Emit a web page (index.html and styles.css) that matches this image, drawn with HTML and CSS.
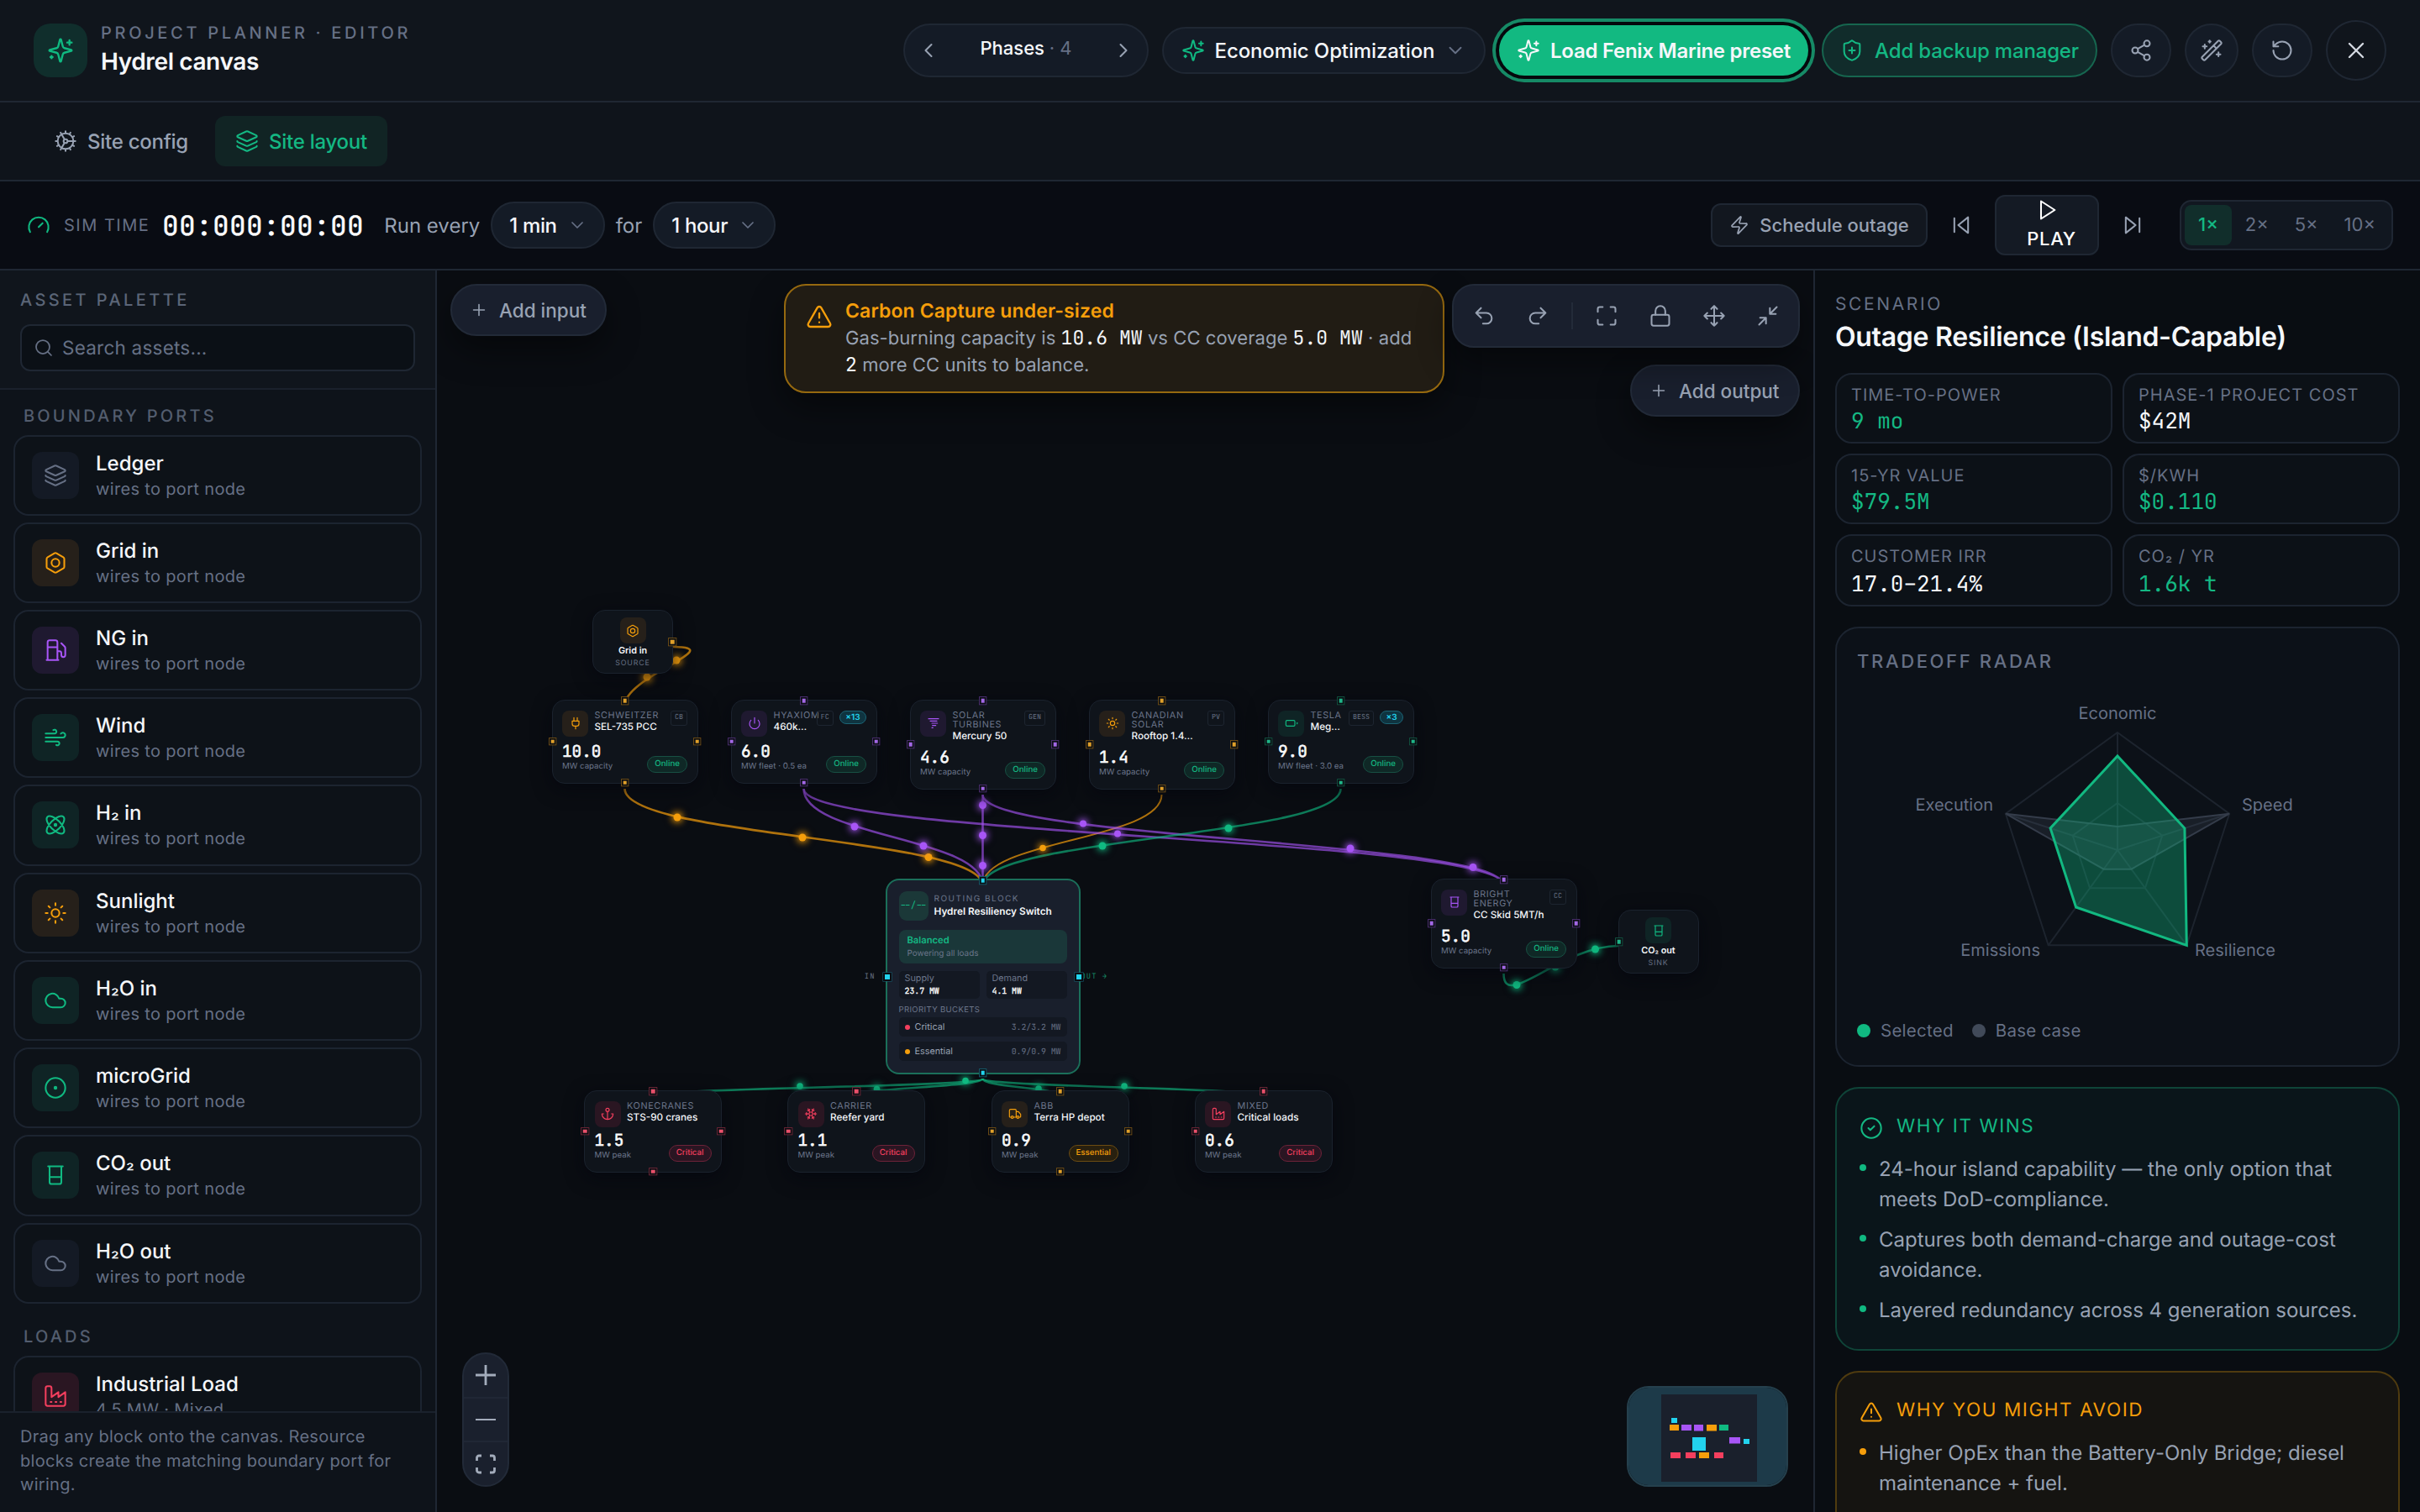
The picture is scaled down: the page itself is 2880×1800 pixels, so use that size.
FILE: index.html
```html
<!DOCTYPE html>
<html lang="en">
<head>
  <meta charset="UTF-8" />
  <meta name="viewport" content="width=device-width, initial-scale=1.0" />
  <title>Hydrel canvas</title>
  <link rel="stylesheet" href="styles.css">
</head>
<body>
  <svg class="sprite" aria-hidden="true">
    <symbol id="sparkles" viewBox="0 0 24 24"><path d="M9.937 15.5A2 2 0 0 0 8.5 14.063l-6.135-1.582a.5.5 0 0 1 0-.962L8.5 9.936A2 2 0 0 0 9.937 8.5l1.582-6.135a.5.5 0 0 1 .963 0L14.063 8.5A2 2 0 0 0 15.5 9.937l6.135 1.581a.5.5 0 0 1 0 .964L15.5 14.063a2 2 0 0 0-1.437 1.437l-1.582 6.135a.5.5 0 0 1-.963 0zM20 3v4M22 5h-4M4 17v2M5 18H3"/></symbol>
    <symbol id="cog" viewBox="0 0 24 24"><path d="M12 20a8 8 0 1 0 0-16 8 8 0 0 0 0 16ZM12 14a2 2 0 1 0 0-4 2 2 0 0 0 0 4ZM12 2v2M12 22v-2M17 20.66l-1-1.73M11 10.27 7 3.34M20.66 17l-1.73-1M3.34 7l1.73 1M14 12h8M2 12h2M20.66 7l-1.73 1M3.34 17l1.73-1M17 3.34l-1 1.73M11 13.73l-4 6.93"/></symbol>
    <symbol id="layers" viewBox="0 0 24 24"><path d="M12.83 2.18a2 2 0 0 0-1.66 0L2.6 6.08a1 1 0 0 0 0 1.83l8.58 3.91a2 2 0 0 0 1.66 0l8.58-3.9a1 1 0 0 0 0-1.83ZM2 12a1 1 0 0 0 .58.91l8.6 3.91a2 2 0 0 0 1.65 0l8.58-3.9A1 1 0 0 0 22 12M2 17a1 1 0 0 0 .58.91l8.6 3.91a2 2 0 0 0 1.65 0l8.58-3.9A1 1 0 0 0 22 17"/></symbol>
    <symbol id="gauge" viewBox="0 0 24 24"><path d="m12 14 4-4M3.34 19a10 10 0 1 1 17.32 0"/></symbol>
    <symbol id="chev-down" viewBox="0 0 24 24"><path d="m6 9 6 6 6-6"/></symbol>
    <symbol id="chev-left" viewBox="0 0 24 24"><path d="m15 18-6-6 6-6"/></symbol>
    <symbol id="chev-right" viewBox="0 0 24 24"><path d="m9 18 6-6-6-6"/></symbol>
    <symbol id="share" viewBox="0 0 24 24"><circle cx="18" cy="5" r="3"/><circle cx="6" cy="12" r="3"/><circle cx="18" cy="19" r="3"/><path d="m8.59 13.51 6.83 3.98M15.41 6.51l-6.82 3.98"/></symbol>
    <symbol id="wand" viewBox="0 0 24 24"><path d="m21.64 3.64-1.28-1.28a1.21 1.21 0 0 0-1.72 0L2.36 18.64a1.21 1.21 0 0 0 0 1.72l1.28 1.28a1.2 1.2 0 0 0 1.72 0L21.64 5.36a1.2 1.2 0 0 0 0-1.72M14 7l3 3M5 6v4M19 14v4M10 2v2M7 8H3M21 16h-4M11 3H9"/></symbol>
    <symbol id="reset" viewBox="0 0 24 24"><path d="M3 12a9 9 0 1 0 9-9 9.75 9.75 0 0 0-6.74 2.74L3 8M3 3v5h5"/></symbol>
    <symbol id="close" viewBox="0 0 24 24"><path d="M18 6 6 18M6 6l12 12"/></symbol>
    <symbol id="shield" viewBox="0 0 24 24"><path d="M20 13c0 5-3.5 7.5-7.66 8.95a1 1 0 0 1-.67-.01C7.5 20.5 4 18 4 13V6a1 1 0 0 1 1-1c2 0 4.5-1.2 6.24-2.72a1.17 1.17 0 0 1 1.52 0C14.51 3.81 17 5 19 5a1 1 0 0 1 1 1zM9 12h6M12 9v6"/></symbol>
    <symbol id="zap" viewBox="0 0 24 24"><path d="M4 14a1 1 0 0 1-.78-1.63l9.9-10.2a.5.5 0 0 1 .86.46l-1.92 6.02A1 1 0 0 0 13 10h7a1 1 0 0 1 .78 1.63l-9.9 10.2a.5.5 0 0 1-.86-.46l1.92-6.02A1 1 0 0 0 11 14z"/></symbol>
    <symbol id="skip-back" viewBox="0 0 24 24"><path d="M19 20 9 12l10-8zM5 19V5"/></symbol>
    <symbol id="skip-fwd" viewBox="0 0 24 24"><path d="m5 4 10 8-10 8zM19 5v14"/></symbol>
    <symbol id="play" viewBox="0 0 24 24"><path d="m6 3 14 9-14 9z"/></symbol>
    <symbol id="undo" viewBox="0 0 24 24"><path d="M9 14 4 9l5-5M4 9h10.5a5.5 5.5 0 0 1 0 11H11"/></symbol>
    <symbol id="redo" viewBox="0 0 24 24"><path d="m15 14 5-5-5-5M20 9H9.5a5.5 5.5 0 0 0 0 11H13"/></symbol>
    <symbol id="maximize" viewBox="0 0 24 24"><path d="M8 3H5a2 2 0 0 0-2 2v3M21 8V5a2 2 0 0 0-2-2h-3M3 16v3a2 2 0 0 0 2 2h3M16 21h3a2 2 0 0 0 2-2v-3"/></symbol>
    <symbol id="lock" viewBox="0 0 24 24"><rect x="3" y="11" width="18" height="11" rx="2"/><path d="M7 11V7a5 5 0 0 1 10 0v4"/></symbol>
    <symbol id="move" viewBox="0 0 24 24"><path d="M12 2v20M15 19l-3 3-3-3M19 9l3 3-3 3M2 12h20M5 9l-3 3 3 3M9 5l3-3 3 3"/></symbol>
    <symbol id="minimize" viewBox="0 0 24 24"><path d="M4 14h6v6M20 10h-6V4M14 10l7-7M3 21l7-7"/></symbol>
    <symbol id="plus" viewBox="0 0 24 24"><path d="M5 12h14M12 5v14"/></symbol>
    <symbol id="search" viewBox="0 0 24 24"><circle cx="11" cy="11" r="8"/><path d="m21 21-4.3-4.3"/></symbol>
    <symbol id="nut" viewBox="0 0 24 24"><path d="M21 16V8a2 2 0 0 0-1-1.73l-7-4a2 2 0 0 0-2 0l-7 4A2 2 0 0 0 3 8v8a2 2 0 0 0 1 1.73l7 4a2 2 0 0 0 2 0l7-4A2 2 0 0 0 21 16z"/><circle cx="12" cy="12" r="4"/></symbol>
    <symbol id="fuel" viewBox="0 0 24 24"><path d="M3 22h12M4 9h10M14 22V4a2 2 0 0 0-2-2H6a2 2 0 0 0-2 2v18M14 13h2a2 2 0 0 1 2 2v2a2 2 0 0 0 4 0V9.83a2 2 0 0 0-.59-1.42L18 5"/></symbol>
    <symbol id="wind" viewBox="0 0 24 24"><path d="M12.8 19.6A2 2 0 1 0 14 16H2M17.5 8a2.5 2.5 0 1 1 2 4H2M9.8 4.4A2 2 0 1 1 11 8H2"/></symbol>
    <symbol id="atom" viewBox="0 0 24 24"><circle cx="12" cy="12" r="1"/><path d="M20.2 20.2c2.04-2.03.02-7.36-4.5-11.9-4.54-4.52-9.87-6.54-11.9-4.5-2.04 2.03-.02 7.36 4.5 11.9 4.54 4.52 9.87 6.54 11.9 4.5ZM15.7 15.7c4.52-4.54 6.54-9.87 4.5-11.9-2.03-2.04-7.36-.02-11.9 4.5-4.52 4.54-6.54 9.87-4.5 11.9 2.03 2.04 7.36.02 11.9-4.5Z"/></symbol>
    <symbol id="sun" viewBox="0 0 24 24"><circle cx="12" cy="12" r="4"/><path d="M12 2v2M12 20v2M4.93 4.93l1.41 1.41M17.66 17.66l1.41 1.41M2 12h2M20 12h2M6.34 17.66l-1.41 1.41M19.07 4.93l-1.41 1.41"/></symbol>
    <symbol id="cloud" viewBox="0 0 24 24"><path d="M17.5 19H9a7 7 0 1 1 6.71-9h1.79a4.5 4.5 0 1 1 0 9Z"/></symbol>
    <symbol id="dot" viewBox="0 0 24 24"><circle cx="12" cy="12" r="10"/><circle cx="12" cy="12" r="1"/></symbol>
    <symbol id="beaker" viewBox="0 0 24 24"><path d="M4.5 3h15M6 3v16a2 2 0 0 0 2 2h8a2 2 0 0 0 2-2V3M6 14h12"/></symbol>
    <symbol id="factory" viewBox="0 0 24 24"><path d="M2 20a2 2 0 0 0 2 2h16a2 2 0 0 0 2-2V8l-7 5V8l-7 5V4a2 2 0 0 0-2-2H4a2 2 0 0 0-2 2ZM17 18h1M12 18h1M7 18h1"/></symbol>
    <symbol id="plug" viewBox="0 0 24 24"><path d="M12 22v-5M9 8V2M15 8V2M18 8v5a4 4 0 0 1-4 4h-4a4 4 0 0 1-4-4V8Z"/></symbol>
    <symbol id="power" viewBox="0 0 24 24"><path d="M12 2v10M18.4 6.6a9 9 0 1 1-12.77.04"/></symbol>
    <symbol id="tornado" viewBox="0 0 24 24"><path d="M21 4H3M18 8H6M19 12H9M16 16h-6M11 20H9"/></symbol>
    <symbol id="battery" viewBox="0 0 24 24"><rect x="2" y="7" width="16" height="10" rx="2"/><path d="M22 11v2"/></symbol>
    <symbol id="anchor" viewBox="0 0 24 24"><path d="M12 22V8M5 12H2a10 10 0 0 0 20 0h-3"/><circle cx="12" cy="5" r="3"/></symbol>
    <symbol id="snow" viewBox="0 0 24 24"><path d="M10 20l-1.25-2.5L6 18M10 4 8.75 6.5 6 6M14 20l1.25-2.5L18 18M14 4l1.25 2.5L18 6M17 21l-3-6h-4M17 3l-3 6 1.5 3M2 12h6.5L10 9M20 10l-1.5 2 1.5 2M22 12h-6.5L14 15M4 10l1.5 2L4 14M7 21l3-6-1.5-3M7 3l3 6h4"/></symbol>
    <symbol id="truck" viewBox="0 0 24 24"><path d="M14 18V6a2 2 0 0 0-2-2H4a2 2 0 0 0-2 2v11a1 1 0 0 0 1 1h2M15 18H9M19 18h2a1 1 0 0 0 1-1v-3.65a1 1 0 0 0-.22-.624l-3.48-4.35A1 1 0 0 0 17.52 8H14"/><circle cx="17" cy="18" r="2"/><circle cx="7" cy="18" r="2"/></symbol>
    <symbol id="check" viewBox="0 0 24 24"><circle cx="12" cy="12" r="10"/><path d="m9 12 2 2 4-4"/></symbol>
    <symbol id="alert" viewBox="0 0 24 24"><path d="m21.73 18-8-14a2 2 0 0 0-3.48 0l-8 14A2 2 0 0 0 4 21h16a2 2 0 0 0 1.73-3M12 9v4M12 17h.01"/></symbol>
  </svg>

  <header class="topbar">
    <div class="logo"><svg class="icon i32"><use href="#sparkles"/></svg></div>
    <div class="brand">
      <div class="eyebrow">PROJECT PLANNER · EDITOR</div>
      <div class="brand-name">Hydrel canvas</div>
    </div>
    <div class="actions">
      <div class="pill phases">
        <svg class="icon i28"><use href="#chev-left"/></svg>
        <span>Phases <em>· 4</em></span>
        <svg class="icon i28"><use href="#chev-right"/></svg>
      </div>
      <button class="pill scenario-pick">
        <svg class="icon i28 green"><use href="#sparkles"/></svg>
        Economic Optimization
        <svg class="icon i28 dim"><use href="#chev-down"/></svg>
      </button>
      <button class="pill preset"><svg class="icon i28"><use href="#sparkles"/></svg>Load Fenix Marine preset</button>
      <button class="pill backup"><svg class="icon i28"><use href="#shield"/></svg>Add backup manager</button>
      <button class="pill round"><svg class="icon i28"><use href="#share"/></svg></button>
      <button class="pill round narrow"><svg class="icon i28"><use href="#wand"/></svg></button>
      <button class="pill round"><svg class="icon i28"><use href="#reset"/></svg></button>
      <button class="pill round close"><svg class="icon i32"><use href="#close"/></svg></button>
    </div>
  </header>

  <nav class="tabs">
    <a class="tab"><svg class="icon i28"><use href="#cog"/></svg>Site config</a>
    <a class="tab active"><svg class="icon i28"><use href="#layers"/></svg>Site layout</a>
  </nav>

  <section class="simbar">
    <svg class="icon i28 green"><use href="#gauge"/></svg>
    <span class="sim-label">SIM TIME</span>
    <span class="sim-time">00:000:00:00</span>
    <span class="sim-text">Run every</span>
    <button class="pill select">1 min <svg class="icon i24"><use href="#chev-down"/></svg></button>
    <span class="sim-text">for</span>
    <button class="pill select">1 hour <svg class="icon i24"><use href="#chev-down"/></svg></button>
    <div class="transport">
      <button class="outage"><svg class="icon i24"><use href="#zap"/></svg>Schedule outage</button>
      <svg class="icon i28"><use href="#skip-back"/></svg>
      <button class="play"><svg class="icon i28"><use href="#play"/></svg><span>PLAY</span></button>
      <svg class="icon i28"><use href="#skip-fwd"/></svg>
      <div class="speeds"><span class="on">1×</span><span>2×</span><span>5×</span><span>10×</span></div>
    </div>
  </section>

  <main class="workspace">
    <aside class="palette">
      <div class="palette-head">
        <div class="palette-title">ASSET PALETTE</div>
        <div class="search"><svg class="icon i24"><use href="#search"/></svg>Search assets...</div>
      </div>
      <div class="palette-list" id="paletteList"></div>
      <div class="palette-foot">Drag any block onto the canvas. Resource blocks create the matching boundary port for wiring.</div>
    </aside>

    <section class="canvas">
      <svg class="edges" viewBox="0 0 1638 1478">
        <g class="e orange">
          <path d="M281 448C349 448 223.500 483 223.500 518"/>
          <path d="M223.500 617C223.500 674.500 649.500 674.500 649.500 732"/>
          <path class="thin" d="M862.500 624C862.500 678 649.500 678 649.500 732"/>
        </g>
        <g class="e purple">
          <path d="M436.500 617C436.500 674.500 649.500 674.500 649.500 732"/>
          <path d="M436.500 617C436.500 674.500 1269.500 674.500 1269.500 732"/>
          <path d="M649.500 624V732"/>
          <path d="M649.500 624C649.500 678 1269.500 678 1269.500 732"/>
        </g>
        <g class="e green">
          <path d="M1075.500 617C1075.500 674.500 649.500 674.500 649.500 732"/>
          <path d="M1269.500 837C1269.500 882 1338 804 1406 804"/>
          <path d="M649.500 962C649.500 972.500 257 972.500 257 983"/>
          <path d="M649.500 962C649.500 972.500 499 972.500 499 983"/>
          <path d="M649.500 962C649.500 972.500 741 972.500 741 983"/>
          <path d="M649.500 962C649.500 972.500 983 972.500 983 983"/>
        </g>
        <g class="pulse orange">
          <circle cx="285" cy="464" r="4.500"/><circle cx="250" cy="484" r="4.500"/>
          <circle cx="286" cy="651" r="4.500"/><circle cx="435" cy="675" r="4.500"/><circle cx="585" cy="698.500" r="4.500"/>
          <circle cx="721" cy="687.500" r="3.800"/>
        </g>
        <g class="pulse purple">
          <circle cx="497" cy="662" r="4.500"/><circle cx="579" cy="685" r="4.500"/>
          <circle cx="649.500" cy="636.500" r="4.500"/><circle cx="649.500" cy="672.500" r="4.500"/><circle cx="649.500" cy="708.500" r="4.500"/>
          <circle cx="769" cy="658.500" r="4"/><circle cx="810" cy="670.500" r="4"/><circle cx="1087" cy="688" r="4.500"/><circle cx="1233" cy="710.500" r="4.500"/>
        </g>
        <g class="pulse green">
          <circle cx="792" cy="685" r="4.500"/><circle cx="942" cy="664" r="4.500"/>
          <circle cx="1285" cy="850.500" r="4.500"/><circle cx="1331" cy="829" r="4.500"/><circle cx="1378.500" cy="808" r="4.500"/>
          <circle cx="432" cy="971" r="3.800"/><circle cx="523.500" cy="974.500" r="3.800"/><circle cx="629" cy="964.500" r="3.800"/>
          <circle cx="716" cy="974" r="3.800"/><circle cx="818" cy="971" r="3.800"/>
        </g>
      </svg>

      <div id="nodes"></div>

      <div class="router" style="left:533.5px;top:724px">
        <div class="router-head">
          <div class="router-tile">--/--</div>
          <div>
            <div class="router-eyebrow">ROUTING BLOCK</div>
            <div class="router-name">Hydrel Resiliency Switch</div>
          </div>
        </div>
        <div class="router-state"><b>Balanced</b><span>Powering all loads</span></div>
        <div class="router-stats">
          <div><span>Supply</span><b>23.7 MW</b></div>
          <div><span>Demand</span><b>4.1 MW</b></div>
        </div>
        <div class="router-label">PRIORITY BUCKETS</div>
        <div class="bucket"><i class="red"></i>Critical<span>3.2/3.2 MW</span></div>
        <div class="bucket"><i class="orange"></i>Essential<span>0.9/0.9 MW</span></div>
        <span class="port-in">IN</span>
        <span class="port-out">OUT →</span>
        <i class="handle cyan top"></i><i class="handle cyan bottom"></i>
        <i class="handle cyan left big"></i><i class="handle cyan right big"></i>
      </div>

      <button class="float add-input"><svg class="icon i22"><use href="#plus"/></svg>Add input</button>
      <button class="float add-output"><svg class="icon i22"><use href="#plus"/></svg>Add output</button>

      <div class="warning">
        <svg class="icon i32"><use href="#alert"/></svg>
        <div>
          <div class="warning-title">Carbon Capture under-sized</div>
          <div class="warning-body">Gas-burning capacity is <code>10.6 MW</code> vs CC coverage <code>5.0 MW</code> · add <code>2</code> more CC units to balance.</div>
        </div>
      </div>

      <div class="toolbar">
        <span><svg class="icon i28"><use href="#undo"/></svg></span>
        <span><svg class="icon i28"><use href="#redo"/></svg></span>
        <i class="sep"></i>
        <span><svg class="icon i28"><use href="#maximize"/></svg></span>
        <span><svg class="icon i28"><use href="#lock"/></svg></span>
        <span><svg class="icon i28"><use href="#move"/></svg></span>
        <span><svg class="icon i28"><use href="#minimize"/></svg></span>
      </div>

      <div class="zoomer">
        <span><svg viewBox="0 0 24 24"><path d="M0 12h24M12 0v24"/></svg></span>
        <span><svg viewBox="0 0 24 24"><path class="soft" d="M0 12h24"/></svg></span>
        <span><svg viewBox="0 0 24 24"><path d="M7 2H4a2.500 2.500 0 0 0-2.500 2.500V8M17 2h3a2.500 2.500 0 0 1 2.500 2.500V8M7 22H4a2.500 2.500 0 0 1-2.500-2.500V16M17 22h3a2.500 2.500 0 0 0 2.500-2.500V16"/></svg></span>
      </div>

      <svg class="minimap" viewBox="0 0 188 116">
        <rect width="188" height="116" fill="#1d3a49"/>
        <rect x="39" y="8" width="114" height="104" fill="#1a202c"/>
        <g fill="#22d3ee"><path d="M51 36h7v6h-7zM76 59h16v16H76zM137 61h7v6h-7z"/></g>
        <g fill="#f59e0b"><path d="M49 44h11v7H49zM93 44h12v7.500H93zM84 77h12v7H84z"/></g>
        <g fill="#a855f7"><path d="M63 44h12v7H63zM78 44h11v7.500H78zM120 59h13v7.500h-13z"/></g>
        <path d="M108 44h11v7h-11z" fill="#10b981"/>
        <path d="M50 77h12v7H50zM68 77h12v7H68zM102 77h11v7h-11z" fill="#f43f5e"/>
      </svg>
    </section>

    <aside class="details">
      <div class="details-eyebrow">SCENARIO</div>
      <h2>Outage Resilience (Island-Capable)</h2>
      <div class="metrics">
        <div class="metric"><span>TIME-TO-POWER</span><b class="good">9 mo</b></div>
        <div class="metric"><span>PHASE-1 PROJECT COST</span><b>$42M</b></div>
        <div class="metric"><span>15-YR VALUE</span><b class="good">$79.5M</b></div>
        <div class="metric"><span>$/KWH</span><b class="good">$0.110</b></div>
        <div class="metric last"><span>CUSTOMER IRR</span><b>17.0–21.4%</b></div>
        <div class="metric last"><span>CO<i class="two">₂</i> / YR</span><b class="good">1.6k t</b></div>
      </div>

      <div class="radar">
        <div class="radar-title">TRADEOFF RADAR</div>
        <svg class="radar-chart" viewBox="-310 -180 620 360">
          <g class="grid">
            <path d="M0-140 133.100-43.300 82.300 113.300-82.300 113.300-133.100-43.300Z"/>
            <path d="M0-56 53.300-17.300 32.900 45.300-32.900 45.300-53.300-17.300Z"/>
            <path d="M0 0V-140M0 0 133.100-43.300M0 0 82.300 113.300M0 0-82.300 113.300M0 0-133.100-43.300"/>
          </g>
          <path class="base" d="M0-28 133.100-43.300 16.500 22.700-16.500 22.700-133.100-43.300Z"/>
          <path class="selected" d="M0-112 79.900-26 82.300 113.300-49.400 68-79.900-26Z"/>
          <text x="0" y="-156" text-anchor="middle">Economic</text>
          <text x="148" y="-47">Speed</text>
          <text x="92" y="126">Resilience</text>
          <text x="-92" y="126" text-anchor="end">Emissions</text>
          <text x="-148" y="-47" text-anchor="end">Execution</text>
        </svg>
        <div class="legend"><i class="sel"></i>Selected<i class="bas"></i>Base case</div>
      </div>

      <div class="reasons wins">
        <h3><svg class="icon i28"><use href="#check"/></svg>WHY IT WINS</h3>
        <ul>
          <li>24-hour island capability — the only option that meets DoD-compliance.</li>
          <li>Captures both demand-charge and outage-cost avoidance.</li>
          <li>Layered redundancy across 4 generation sources.</li>
        </ul>
      </div>
      <div class="reasons avoid">
        <h3><svg class="icon i28"><use href="#alert"/></svg>WHY YOU MIGHT AVOID</h3>
        <ul>
          <li>Higher OpEx than the Battery-Only Bridge; diesel maintenance + fuel.</li>
        </ul>
      </div>
    </aside>
  </main>

  <script src="script.js"></script>
</body>
</html>
```

FILE: styles.css
```css
* {
  box-sizing: border-box;
}
body {
  margin: 0;
  width: 2880px;
  height: 1800px;
  overflow: hidden;
  display: flex;
  flex-direction: column;
  background: #0a0d12;
  color: #f5f7fa;
  font-family: Inter, "Liberation Sans", sans-serif;
  font-size: 24px;
  text-rendering: geometricPrecision;
}
button {
  font: inherit;
  color: inherit;
  margin: 0;
  cursor: pointer;
}
.sprite {
  position: absolute;
  width: 0;
  height: 0;
}
.icon {
  fill: none;
  stroke: currentColor;
  stroke-width: 1.75;
  stroke-linecap: round;
  stroke-linejoin: round;
  flex: none;
  display: block;
}
.i22 { width: 22px; height: 22px; }
.i24 { width: 24px; height: 24px; }
.i28 { width: 28px; height: 28px; }
.i32 { width: 32px; height: 32px; }
.icon.green { color: #10b981; }
.icon.dim { color: #667085; width: 26px; }
/* chemical subscript, kept on the baseline */
.two {
  font-style: normal;
  font-weight: 400;
  font-size: 0.92em;
  line-height: 0;
  vertical-align: 0.12em;
}

/* top bar */
.topbar {
  flex: none;
  height: 122px;
  display: flex;
  align-items: center;
  padding: 0 40px;
  background: #10151c;
  border-bottom: 2px solid #1f2733;
}
.logo {
  width: 64px;
  height: 64px;
  border-radius: 20px;
  background: #102e2c;
  color: #10b981;
  display: flex;
  align-items: center;
  justify-content: center;
}
.brand {
  margin: -3px 0 0 16px;
}
.eyebrow {
  font-size: 20px;
  line-height: 28px;
  font-weight: 500;
  letter-spacing: 0.184em;
  color: #667085;
}
.brand-name {
  font-size: 28px;
  line-height: 40px;
  font-weight: 600;
  letter-spacing: -0.014em;
}
.actions {
  margin-left: auto;
  display: flex;
  align-items: center;
  gap: 16px;
}
.pill {
  display: flex;
  align-items: center;
  justify-content: center;
  border: 2px solid #1f2733;
  border-radius: 40px;
  background: #141b26;
  white-space: nowrap;
  padding: 0;
}
.phases {
  width: 292px;
  height: 64px;
  justify-content: space-between;
  padding: 0 14px;
  font-size: 22px;
  font-weight: 500;
}
.phases .icon {
  color: #98a2b3;
}
.phases span {
  padding-bottom: 4px;
}
.phases em {
  font-style: normal;
  font-weight: 400;
  color: #667085;
}
.scenario-pick {
  width: 385px;
  height: 56px;
  gap: 12px;
  font-weight: 500;
  letter-spacing: -0.005em;
}
.preset {
  width: 368px;
  height: 60px;
  gap: 12px;
  border: 0;
  background: #12b981;
  font-weight: 600;
  letter-spacing: -0.011em;
  box-shadow: 0 0 0 4px #05080c, 0 0 0 8px #168a66;
}
.backup {
  width: 328px;
  height: 64px;
  gap: 13px;
  font-weight: 500;
  letter-spacing: -0.007em;
  color: #14b883;
  background: #112c2b;
  border-color: #16664f;
}
.round {
  width: 72px;
  height: 64px;
  color: #98a2b3;
}
.narrow {
  width: 64px;
}
.close {
  height: 72px;
  background: none;
  color: #d5dae2;
}

/* tabs */
.tabs {
  flex: none;
  height: 94px;
  display: flex;
  align-items: center;
  gap: 8px;
  padding: 0 40px;
  background: #0f141b;
  border-bottom: 2px solid #1f2733;
}
.tab {
  height: 60px;
  display: flex;
  align-items: center;
  gap: 12px;
  padding: 0 24px;
  border-radius: 12px;
  font-weight: 500;
  letter-spacing: -0.011em;
  color: #98a2b3;
}
.tab.active {
  color: #14b883;
  background: #112424;
}

/* simulation bar */
.simbar {
  flex: none;
  height: 106px;
  display: flex;
  align-items: center;
  padding: 0 32px;
  background: #090c13;
  border-bottom: 2px solid #1f2733;
  color: #98a2b3;
}
.sim-label {
  margin-left: 16px;
  font-size: 20px;
  letter-spacing: 0.075em;
  color: #667085;
}
.sim-time {
  margin: 0 24px 0 15px;
  font-family: "JetBrains Mono", "DejaVu Sans Mono", monospace;
  font-size: 32px;
  letter-spacing: 0.025em;
  color: #fff;
  -webkit-text-stroke: 0.5px #fff;
}
.select {
  height: 56px;
  gap: 12px;
  padding: 0 19px 0 20px;
  margin: 0 13px;
  color: #f5f7fa;
  font-weight: 500;
  letter-spacing: -0.015em;
}
.select .icon {
  color: #667085;
}
.transport {
  margin-left: auto;
  display: flex;
  align-items: center;
}
.outage {
  display: flex;
  align-items: center;
  justify-content: center;
  gap: 12px;
  width: 258px;
  height: 52px;
  margin-right: 26px;
  padding: 0;
  border: 2px solid #1f2733;
  border-radius: 12px;
  background: #12171f;
  font-size: 22px;
  font-weight: 500;
}
.play {
  width: 124px;
  height: 72px;
  margin: 0 26px;
  padding: 0;
  border: 2px solid #1f2733;
  border-radius: 12px;
  background: #141a24;
  color: #fff;
  font-size: 22px;
  font-weight: 500;
  letter-spacing: 0.03em;
  display: flex;
  flex-direction: column;
  align-items: center;
}
.play .icon {
  margin: 2px 0 1px;
}
.play span {
  line-height: 38px;
  margin-left: 11px;
}
.speeds {
  display: flex;
  justify-content: space-between;
  width: 254px;
  height: 60px;
  margin-left: 42px;
  padding: 4px;
  border: 2px solid #1f2733;
  border-radius: 14px;
  background: #111720;
  font-size: 22px;
  line-height: 48px;
  color: #667085;
}
.speeds span {
  padding: 0 15px 0 13px;
}
.speeds .on {
  border-radius: 8px;
  background: #112e2b;
  color: #14b883;
  font-weight: 500;
  padding: 0 16px;
}

.workspace {
  flex: 1;
  min-height: 0;
  display: flex;
}

/* left palette */
.palette {
  width: 520px;
  flex: none;
  display: flex;
  flex-direction: column;
  background: #0e131a;
  border-right: 2px solid #1f2733;
}
.palette-head {
  flex: none;
  height: 142px;
  padding: 21px 24px 0;
  background: #10151c;
  border-bottom: 2px solid #1a212c;
}
.palette-title {
  font-size: 20px;
  line-height: 28px;
  font-weight: 500;
  letter-spacing: 0.17em;
  color: #5b6577;
}
.search {
  margin-top: 15px;
  height: 56px;
  width: 470px;
  display: flex;
  align-items: center;
  gap: 10px;
  padding: 0 14px;
  border: 2px solid #1f2733;
  border-radius: 12px;
  background: #0b1016;
  font-size: 22.500px;
  letter-spacing: 0.01em;
  color: #667085;
}
.palette-list {
  flex: 1;
  min-height: 0;
  overflow: hidden;
  padding: 0 16px;
  display: flex;
  flex-direction: column;
  gap: 8px;
}
.group {
  flex: none;
  height: 46px;
  padding: 16px 12px 0;
  font-size: 20px;
  line-height: 30px;
  font-weight: 500;
  letter-spacing: 0.16em;
  color: #535d6e;
}
.asset {
  flex: none;
  height: 96px;
  display: flex;
  align-items: center;
  gap: 20px;
  padding: 0 20px;
  width: 486px;
  border: 2px solid #1c2430;
  border-radius: 18px;
  background: #0d1218;
}
.asset.chem {
  height: 96.500px;
}
.asset-name {
  padding-top: 2px;
  font-weight: 500;
  line-height: 30px;
}
.asset-sub {
  font-size: 20px;
  line-height: 30px;
  letter-spacing: 0.017em;
  color: #667085;
}
.tile {
  width: 56px;
  height: 56px;
  border-radius: 12px;
  display: flex;
  align-items: center;
  justify-content: center;
}
.tile.grey { background: #141a25; color: #667085; }
.tile.orange { background: #26201a; color: #f59e0b; }
.tile.purple { background: #1f1930; color: #a855f7; }
.tile.green { background: #0f2425; color: #10b981; }
.tile.red { background: #2a1622; color: #f43f5e; }
.palette-foot {
  flex: none;
  height: 120px;
  padding: 14px 24px;
  border-top: 2px solid #1a212c;
  font-size: 20px;
  line-height: 28.600px;
  letter-spacing: 0.015em;
  color: #667085;
}

/* canvas */
.canvas {
  position: relative;
  flex: 1;
  overflow: hidden;
  background: #0a0d12;
}
.edges {
  position: absolute;
  inset: 0;
  width: 1638px;
  height: 1478px;
}
.e path {
  fill: none;
  stroke-width: 2.600;
  opacity: 0.7;
}
.e path.thin { stroke-width: 2; }
.e.orange { stroke: #f59e0b; }
.e.purple { stroke: #a855f7; }
.e.green { stroke: #10b981; }
.e.purple path { opacity: 0.64; }
.e.green path { opacity: 0.64; }
.pulse.orange { fill: #f59e0b; filter: drop-shadow(0 0 5px #f59e0b) drop-shadow(0 0 3px rgba(245, 158, 11, 0.6)); }
.pulse.purple { fill: #a855f7; filter: drop-shadow(0 0 5px #a855f7) drop-shadow(0 0 3px rgba(168, 85, 247, 0.6)); }
.pulse.green { fill: #10b981; filter: drop-shadow(0 0 5px #10b981) drop-shadow(0 0 3px rgba(16, 185, 129, 0.6)); }

.node {
  position: absolute;
  width: 174px;
  padding: 11.500px;
  border: 1px solid #1a222d;
  border-radius: 15px;
  background: #0f141b;
  box-shadow: 0 6px 22px rgba(4, 6, 14, 0.7);
}
.node.load {
  width: 164px;
}
.node.port {
  width: 96px;
  height: 76px;
  padding: 8px 0 0;
  text-align: center;
}
.node .tile {
  width: 31px;
  height: 31px;
  border-radius: 8px;
  flex: none;
}
.node .icon {
  width: 16px;
  height: 16px;
}
.node.port .tile {
  margin: 0 auto;
}
.port-name {
  font-size: 10.800px;
  line-height: 15px;
  margin-top: 1px;
  font-weight: 600;
}
.port-kind {
  font-size: 8.800px;
  line-height: 15px;
  letter-spacing: 0.1em;
  color: #667085;
}
.node-head {
  display: flex;
  align-items: flex-start;
  min-height: 31px;
}
.node-meta {
  flex: 1;
  min-width: 0;
  margin-left: 7.500px;
  white-space: nowrap;
}
.node-vendor {
  font-size: 10.800px;
  line-height: 11px;
  letter-spacing: 0.06em;
  color: #6c768b;
}
.node-name {
  margin-top: 1.500px;
  font-size: 11.700px;
  line-height: 14.500px;
  font-weight: 500;
}
.tag {
  margin-top: 0.500px;
  height: 18px;
  padding: 0 4px;
  border: 1px solid #1d2530;
  border-radius: 3px;
  font-family: "JetBrains Mono", "DejaVu Sans Mono", monospace;
  font-size: 8.300px;
  line-height: 15px;
  color: #6a7488;
}
.count {
  margin-left: 7px;
  height: 16px;
  padding: 0 6.500px;
  border: 1px solid #1b6475;
  border-radius: 8px;
  background: #0f3440;
  font-size: 10px;
  line-height: 14px;
  font-weight: 600;
  color: #22d3ee;
}
.node-foot {
  margin-top: 5.500px;
  display: flex;
  justify-content: space-between;
  align-items: flex-end;
}
.node.load .node-foot {
  margin-top: 3.500px;
}
.node-value {
  font-family: "JetBrains Mono", "DejaVu Sans Mono", monospace;
  font-size: 19.300px;
  line-height: 24px;
  -webkit-text-stroke: 0.600px #fff;
}
.node-unit {
  font-size: 9.700px;
  line-height: 14px;
  color: #6c768b;
}
.badge {
  height: 20px;
  padding: 0 8px;
  border-radius: 10px;
  border: 1px solid;
  font-size: 9.700px;
  line-height: 18px;
  font-weight: 500;
}
.badge.green { color: #14b883; background: #0f2826; border-color: #175043; }
.badge.red { color: #f43f5e; background: #2a1522; border-color: #6d2338; }
.badge.orange { color: #f59e0b; background: #28200f; border-color: #6d4c12; }

.handle {
  position: absolute;
  width: 8.600px;
  height: 8.600px;
  border: 2px solid #0a0d12;
  transform: translate(-50%, -50%);
}
.handle.big { width: 10px; height: 10px; }
.handle.top { left: 50%; top: 0; }
.handle.bottom { left: 50%; top: 100%; }
.handle.left { left: 0; top: 50%; }
.handle.right { left: 100%; top: 50%; }
.handle.orange { background: #e0a02a; box-shadow: 0 0 0 0.600px #7a5212; }
.handle.purple { background: #a368e6; box-shadow: 0 0 0 0.600px #4f2c78; }
.handle.green { background: #1fb487; box-shadow: 0 0 0 0.600px #12543f; }
.handle.red { background: #e8506a; box-shadow: 0 0 0 0.600px #722438; }
.handle.cyan { background: #22d3ee; box-shadow: 0 0 0 0.600px #17586a; }

.router {
  position: absolute;
  width: 232px;
  height: 233px;
  padding: 13px 14px 0;
  border: 2px solid #1b6f5a;
  border-radius: 16px;
  background: #191f2c;
  font-size: 10.800px;
}
.router-head {
  display: flex;
  align-items: center;
  gap: 7px;
  height: 35px;
}
.router-tile {
  width: 35px;
  height: 35px;
  border-radius: 9px;
  background: #1b3838;
  color: #14b883;
  font-family: "JetBrains Mono", "DejaVu Sans Mono", monospace;
  font-size: 10.600px;
  line-height: 35px;
  text-align: center;
}
.router-eyebrow {
  font-size: 10px;
  line-height: 14px;
  letter-spacing: 0.15em;
  color: #6c768b;
}
.router-name {
  font-size: 11.800px;
  line-height: 17px;
  font-weight: 600;
}
.router-state {
  margin-top: 11px;
  height: 40px;
  padding: 5px 10px;
  border-radius: 8px;
  background: #1a3739;
}
.router-state b,
.router-state span {
  display: block;
  line-height: 15.500px;
}
.router-state b {
  font-size: 11.200px;
  font-weight: 600;
  color: #14b883;
}
.router-state span {
  font-size: 9.900px;
  color: #6c768b;
}
.router-stats {
  margin-top: 9px;
  display: flex;
  gap: 8px;
}
.router-stats div {
  flex: 1;
  height: 33px;
  padding: 0 7px;
  border-radius: 5px;
  background: #131822;
}
.router-stats span,
.router-stats b {
  display: block;
  line-height: 15px;
}
.router-stats span {
  padding-top: 1px;
  color: #6c768b;
}
.router-stats b {
  font-family: "JetBrains Mono", "DejaVu Sans Mono", monospace;
  font-size: 9.800px;
  font-weight: 400;
  -webkit-text-stroke: 0.300px #fff;
}
.router-label {
  margin-top: 7px;
  font-size: 9.500px;
  line-height: 14px;
  letter-spacing: 0.04em;
  color: #6c768b;
}
.bucket {
  margin-top: 1px;
  height: 23px;
  display: flex;
  align-items: center;
  padding: 0 7px;
  border-radius: 5px;
  background: #131822;
  color: #98a2b3;
}
.bucket + .bucket {
  margin-top: 6px;
}
.bucket i {
  width: 6px;
  height: 6px;
  margin-right: 6px;
  border-radius: 50%;
}
.bucket i.red { background: #f43f5e; }
.bucket i.orange { background: #f59e0b; }
.bucket span {
  margin-left: auto;
  font-family: "JetBrains Mono", "DejaVu Sans Mono", monospace;
  font-size: 9.800px;
  color: #667085;
}
.port-in,
.port-out {
  position: absolute;
  top: 108px;
  font-family: "JetBrains Mono", "DejaVu Sans Mono", monospace;
  font-size: 8.800px;
  line-height: 12px;
  letter-spacing: 0.12em;
  color: #667085;
  white-space: nowrap;
}
.port-in { right: 242px; }
.port-out { left: 231px; color: #168a66; }

/* floating controls */
.float {
  position: absolute;
  display: flex;
  align-items: center;
  gap: 13px;
  height: 62px;
  padding: 0 21px;
  border: 2px solid #222a38;
  border-radius: 31px;
  background: #191f2d;
  color: #98a2b3;
  font-size: 22.500px;
  font-weight: 500;
  box-shadow: 0 16px 40px rgba(0, 0, 0, 0.45);
}
.add-input { left: 16px; top: 16px; width: 186px; }
.add-output { right: 16px; top: 112px; width: 202px; }
.warning {
  position: absolute;
  left: 413px;
  top: 16px;
  width: 786px;
  height: 130px;
  display: flex;
  gap: 15px;
  padding: 15px 24px;
  border: 2px solid #96690f;
  border-radius: 26px;
  background: #211c14;
  color: #98a2b3;
  font-size: 22px;
  line-height: 32px;
  box-shadow: 0 16px 40px rgba(0, 0, 0, 0.45);
}
.warning .icon {
  margin-top: 6px;
  color: #f59e0b;
}
.warning-title {
  line-height: 34px;
  margin-top: -2px;
  font-size: 23px;
  letter-spacing: 0.005em;
  font-weight: 600;
  color: #f59e0b;
}
.warning-body {
  letter-spacing: 0.003em;
}
.warning code {
  font-family: "JetBrains Mono", "DejaVu Sans Mono", monospace;
  font-size: 23px;
  line-height: 0;
  color: #f5f7fa;
}
.toolbar {
  position: absolute;
  right: 16px;
  top: 16px;
  height: 76px;
  display: flex;
  align-items: center;
  gap: 8px;
  padding: 0 8px;
  border: 2px solid #222a38;
  border-radius: 26px;
  background: #191f2d;
  color: #98a2b3;
  box-shadow: 0 16px 40px rgba(0, 0, 0, 0.45);
}
.toolbar span {
  width: 56px;
  display: flex;
  justify-content: center;
}
.sep {
  width: 2px;
  height: 32px;
  margin: 0 4px;
  background: #232b39;
}
.zoomer {
  position: absolute;
  left: 30px;
  bottom: 30px;
  width: 56px;
  height: 160px;
  display: flex;
  flex-direction: column;
  border: 2px solid #222a38;
  border-radius: 28px;
  background: #1a202d;
  overflow: hidden;
}
.zoomer span {
  flex: 1;
  display: flex;
  align-items: center;
  justify-content: center;
}
.zoomer span + span {
  border-top: 2px solid #202735;
}
.zoomer svg {
  width: 24px;
  height: 24px;
  fill: none;
  stroke: #a3acbb;
  stroke-width: 2.800;
}
.zoomer .soft {
  stroke-width: 2;
}
.minimap {
  position: absolute;
  right: 30px;
  bottom: 30px;
  width: 192px;
  height: 120px;
  border: 2px solid #25404d;
  border-radius: 26px;
}

/* right panel */
.details {
  width: 722px;
  flex: none;
  overflow: hidden;
  padding: 27px 24px 0;
  border-left: 2px solid #1f2733;
  background: #090d12;
}
.details-eyebrow {
  font-size: 21px;
  line-height: 28px;
  letter-spacing: 0.125em;
  color: #667085;
}
.details h2 {
  margin: 3px 0 22px;
  font-size: 32px;
  line-height: 42px;
  font-weight: 600;
  letter-spacing: -0.009em;
  white-space: nowrap;
}
.metrics {
  display: grid;
  grid-template-columns: 1fr 1fr;
  gap: 12px;
}
.metric {
  height: 84px;
  padding: 11px 17px;
  border: 2px solid #1c2430;
  border-radius: 20px;
  background: #0c1117;
}
.metric.last {
  height: 86px;
}
.metric span {
  display: block;
  font-size: 20px;
  line-height: 26px;
  letter-spacing: 0.05em;
  color: #667085;
}
.metric b {
  display: block;
  font-family: "JetBrains Mono", "DejaVu Sans Mono", monospace;
  font-weight: 400;
  font-size: 26px;
  line-height: 34px;
  margin-top: 1px;
}
.metric.last b {
  margin-top: 3px;
}
.metric b.good { color: #14b883; }
.radar {
  margin-top: 24px;
  height: 524px;
  padding: 25px 24px;
  border: 2px solid #1c2430;
  border-radius: 28px;
  background: #0c1118;
}
.radar-title {
  font-size: 22px;
  line-height: 30px;
  font-weight: 500;
  letter-spacing: 0.12em;
  color: #667085;
}
.radar-chart {
  display: block;
  width: 620px;
  height: 360px;
  margin: 29px 0 0;
}
.radar-chart text {
  font-size: 20px;
  fill: #667085;
}
.grid {
  fill: none;
  stroke: #1d242e;
  stroke-width: 2;
}
.base {
  fill: rgba(102, 112, 133, 0.15);
  stroke: #343c4a;
  stroke-width: 2;
}
.selected {
  fill: rgba(16, 185, 129, 0.35);
  stroke: #12b981;
  stroke-width: 3;
}
.legend {
  display: flex;
  align-items: center;
  margin-top: 21px;
  font-size: 20.500px;
  line-height: 28px;
  letter-spacing: 0.012em;
  color: #667085;
}
.legend i {
  width: 16px;
  height: 16px;
  margin-right: 12px;
  border-radius: 50%;
}
.legend .sel { background: #10b981; }
.legend .bas { background: #414a59; margin-left: 22px; }
.reasons {
  margin-top: 24px;
  height: 314px;
  padding: 30px 27px;
  border: 2px solid #0f4438;
  border-radius: 28px;
  background: #0a151a;
}
.reasons h3 {
  display: flex;
  align-items: center;
  gap: 16px;
  margin: 0 0 18px;
  font-size: 22.500px;
  line-height: 30px;
  font-weight: 400;
  letter-spacing: 0.07em;
  color: #14b883;
}
.reasons h3 .icon {
  position: relative;
  top: 2px;
}
.reasons ul {
  list-style: none;
  margin: 0;
  padding: 0;
}
.reasons li {
  position: relative;
  margin-bottom: 12px;
  padding-left: 23px;
  line-height: 36px;
  color: #98a2b3;
}
.reasons li::before {
  content: "";
  position: absolute;
  left: 0;
  top: 12px;
  width: 8px;
  height: 8px;
  border-radius: 50%;
  background: #10b981;
}
.reasons.avoid {
  background: #151411;
  border-color: #4f3b0f;
}
.avoid h3 { color: #f59e0b; }
.avoid li::before { background: #f59e0b; }
```

FILE: script.js
```javascript
const icon = (name, size) => `<svg class="icon ${size || ""}"><use href="#${name}"/></svg>`;
const sub = text => text.replace("₂", '<i class="two">₂</i>');

const palette = [
  { group: "BOUNDARY PORTS" },
  { name: "Ledger", icon: "layers", color: "grey" },
  { name: "Grid in", icon: "nut", color: "orange" },
  { name: "NG in", icon: "fuel", color: "purple" },
  { name: "Wind", icon: "wind", color: "green" },
  { name: "H₂ in", icon: "atom", color: "green" },
  { name: "Sunlight", icon: "sun", color: "orange" },
  { name: "H₂O in", icon: "cloud", color: "green" },
  { name: "microGrid", icon: "dot", color: "green" },
  { name: "CO₂ out", icon: "beaker", color: "green" },
  { name: "H₂O out", icon: "cloud", color: "grey" },
  { group: "LOADS" },
  { name: "Industrial Load", sub: "4.5 MW · Mixed", icon: "factory", color: "red" }
];

document.getElementById("paletteList").innerHTML = palette.map(p => p.group
  ? `<div class="group">${p.group}</div>`
  : `<div class="asset ${p.name.includes("₂") ? "chem" : ""}">
      <div class="tile ${p.color}">${icon(p.icon, "i28")}</div>
      <div>
        <div class="asset-name">${sub(p.name)}</div>
        <div class="asset-sub">${p.sub || "wires to port node"}</div>
      </div>
    </div>`).join("");

// x / y are canvas coordinates
const nodes = [
  { x: 136.5, y: 511, vendor: "SCHWEITZER", name: "SEL-735 PCC", tag: "CB", icon: "plug", color: "orange", value: "10.0", unit: "MW capacity" },
  { x: 349.5, y: 511, vendor: "HYAXIOM", name: "460k…", tag: "FC", count: "×13", icon: "power", color: "purple", value: "6.0", unit: "MW fleet · 0.5 ea" },
  { x: 562.5, y: 511, vendor: "SOLAR<br>TURBINES", name: "Mercury 50", tag: "GEN", icon: "tornado", color: "purple", value: "4.6", unit: "MW capacity" },
  { x: 775.5, y: 511, vendor: "CANADIAN<br>SOLAR", name: "Rooftop 1.4…", tag: "PV", icon: "sun", color: "orange", value: "1.4", unit: "MW capacity" },
  { x: 988.5, y: 511, vendor: "TESLA", name: "Meg…", tag: "BESS", count: "×3", icon: "battery", color: "green", value: "9.0", unit: "MW fleet · 3.0 ea" },
  { x: 1182.5, y: 724, vendor: "BRIGHT<br>ENERGY", name: "CC Skid 5MT/h", tag: "CC", icon: "beaker", color: "purple", value: "5.0", unit: "MW capacity" },
  { x: 175, y: 976, load: "Critical", vendor: "KONECRANES", name: "STS-90 cranes", icon: "anchor", color: "red", value: "1.5", unit: "MW peak" },
  { x: 417, y: 976, load: "Critical", vendor: "CARRIER", name: "Reefer yard", icon: "snow", color: "red", value: "1.1", unit: "MW peak", sides: ["top", "left"] },
  { x: 659.5, y: 976, load: "Essential", vendor: "ABB", name: "Terra HP depot", icon: "truck", color: "orange", value: "0.9", unit: "MW peak" },
  { x: 901.5, y: 976, load: "Critical", vendor: "MIXED", name: "Critical loads", icon: "factory", color: "red", value: "0.6", unit: "MW peak", sides: ["top", "left"] }
];

const ports = [
  { x: 185, y: 404, name: "Grid in", kind: "SOURCE", icon: "nut", color: "orange", side: "right" },
  { x: 1405.5, y: 761, name: "CO₂ out", kind: "SINK", icon: "beaker", color: "green", side: "left" }
];

const handles = (sides, color) => sides.map(s => `<i class="handle ${color} ${s}"></i>`).join("");

document.getElementById("nodes").innerHTML = nodes.map(n => `
  <div class="node ${n.load ? "load" : ""}" style="left:${n.x}px;top:${n.y}px">
    <div class="node-head">
      <div class="tile ${n.color}">${icon(n.icon)}</div>
      <div class="node-meta">
        <div class="node-vendor">${n.vendor}</div>
        <div class="node-name">${n.name}</div>
      </div>
      ${n.tag ? `<span class="tag">${n.tag}</span>` : ""}
      ${n.count ? `<span class="count">${n.count}</span>` : ""}
    </div>
    <div class="node-foot">
      <div>
        <div class="node-value">${n.value}</div>
        <div class="node-unit">${n.unit}</div>
      </div>
      <span class="badge ${n.load ? n.color : "green"}">${n.load || "Online"}</span>
    </div>
    ${handles(n.sides || ["top", "bottom", "left", "right"], n.color)}
  </div>`).join("") + ports.map(p => `
  <div class="node port" style="left:${p.x}px;top:${p.y}px">
    <div class="tile ${p.color}">${icon(p.icon)}</div>
    <div class="port-name">${sub(p.name)}</div>
    <div class="port-kind">${p.kind}</div>
    ${handles([p.side], p.color)}
  </div>`).join("");
```
